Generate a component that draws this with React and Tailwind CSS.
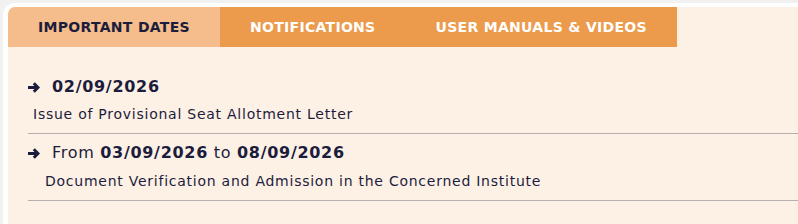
import React from 'react';

const tabs = [
  { label: 'IMPORTANT DATES', active: true },
  { label: 'NOTIFICATIONS', active: false },
  { label: 'USER MANUALS & VIDEOS', active: false },
];

const Arrow = () => (
  <svg viewBox="0 0 12 11" width="12" height="11" className="mr-3 shrink-0" fill="none" stroke="currentColor" strokeWidth="3">
    <path d="M0 5.5H10" />
    <path d="M5.8 1.2L10 5.5L5.8 9.8" />
  </svg>
);

const App = () => {
  return (
    <div className="h-[224px] overflow-hidden bg-[#f1f1f1] pt-[3px] pl-[3px] text-[#1c1c3c]" style={{ fontFamily: '"DejaVu Sans", Verdana, sans-serif' }}>
      <div className="h-full w-[820px] border-t-4 border-l-[5px] border-white rounded-tl-[12px] overflow-hidden bg-[#fdf1e6]">
        {/* Tabs */}
        <div className="flex">
          {tabs.map(t => (
            <div
              key={t.label}
              className={`h-10 px-[30px] flex items-center text-[14px] tracking-[0.3px] font-bold ${t.active ? 'bg-[#f4bd8b] text-[#1c1c3c]' : 'bg-[#ec9a4c] text-white'}`}
            >
              {t.label}
            </div>
          ))}
        </div>

        {/* Dates list */}
        <div className="ml-5 pt-[21px]">
          <div className="pt-[7px] pb-[9px] border-b border-[#b5b0ad]">
            <div className="flex items-center h-6 text-[16px] tracking-[0.7px]">
              <Arrow />
              <span className="font-bold">02/09/2026</span>
            </div>
            <p className="mt-[5px] pl-[5px] text-[14px] leading-5 tracking-[0.75px]">Issue of Provisional Seat Allotment Letter</p>
          </div>
          <div className="pt-[7px] pb-[9px] border-b border-[#b5b0ad]">
            <div className="flex items-center h-6 text-[16px] tracking-[0.7px]">
              <Arrow />
              <span>From <b>03/09/2026</b> to <b>08/09/2026</b></span>
            </div>
            <p className="mt-[6px] pl-[17px] text-[14px] leading-5 tracking-[0.75px]">Document Verification and Admission in the Concerned Institute</p>
          </div>
        </div>
      </div>
    </div>
  );
};

export default App;
